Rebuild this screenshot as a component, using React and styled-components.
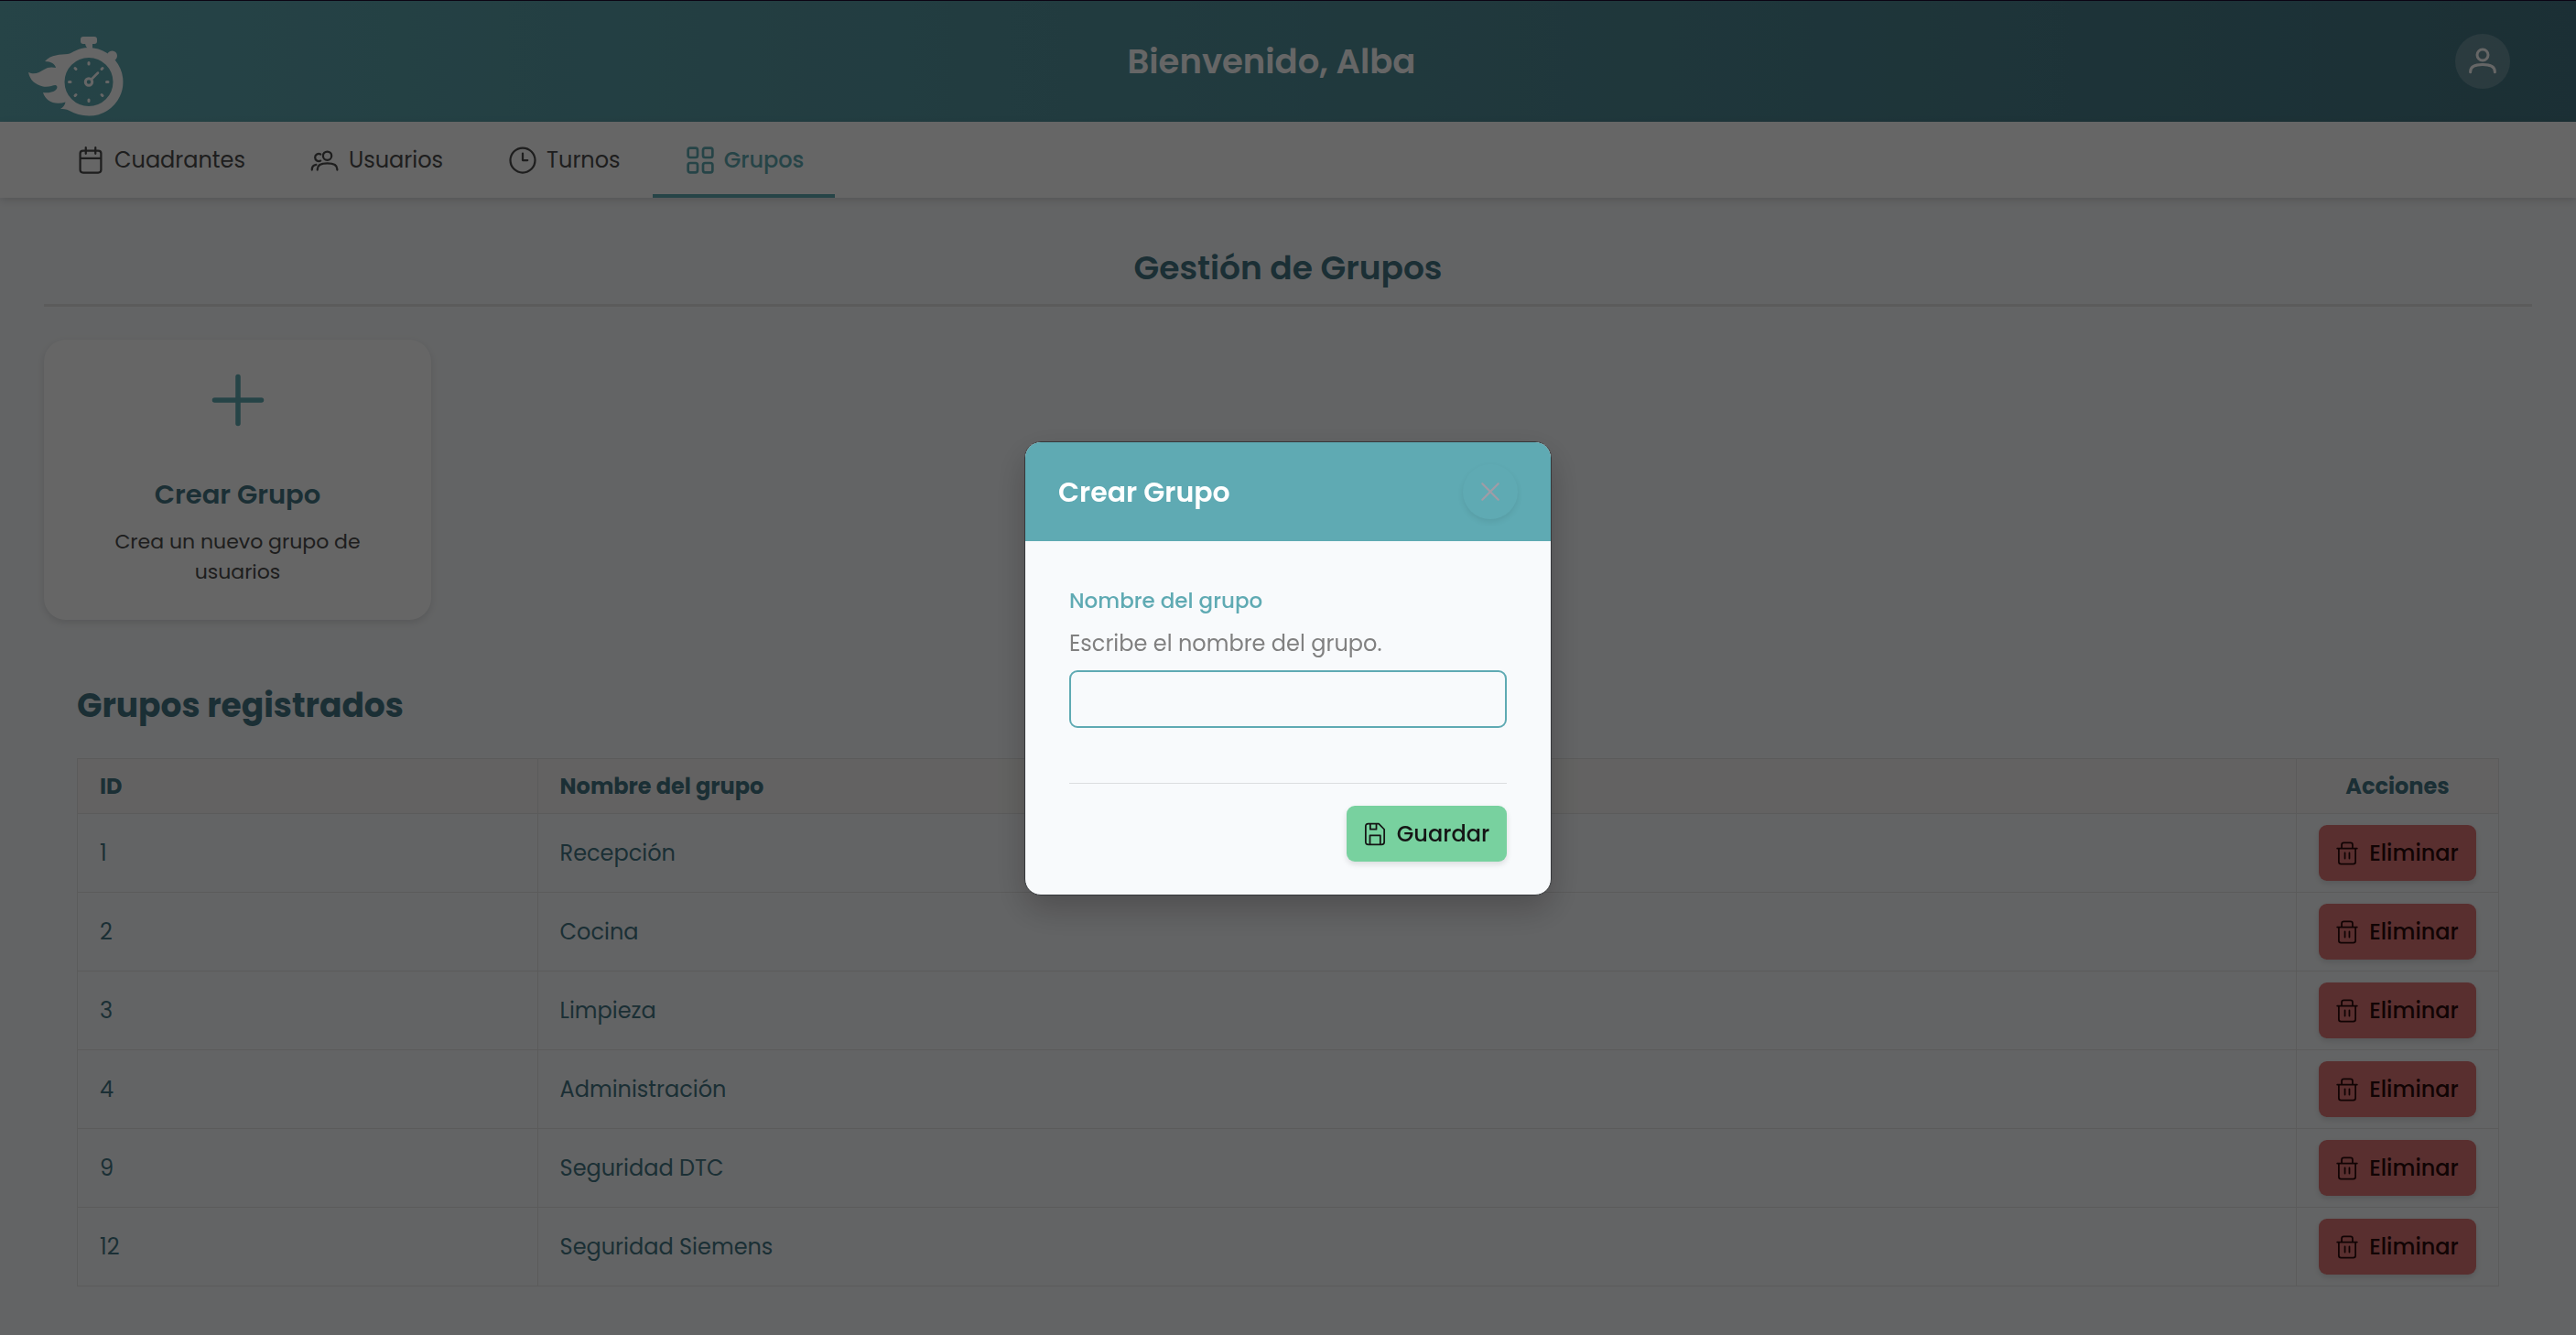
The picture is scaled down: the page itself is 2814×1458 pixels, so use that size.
import React from "react";
import styled, { createGlobalStyle } from "styled-components";

const font = `Poppins, Inter, "Open Sans", sans-serif`;

const GlobalStyle = createGlobalStyle`
  * { box-sizing: border-box; }
  body { margin: 0; background: #f8fafc; font-family: ${font}; color: #4b4b4b; }
  h1, h2, h3, p { margin: 0; }
  button, input { font-family: inherit; }
`;

const Page = styled.div`
  min-height: 100vh;
  background: #f8fafc;
`;

const TopBar = styled.header`
  display: flex;
  align-items: center;
  justify-content: space-between;
  height: 133px;
  padding: 0 72px 0 24px;
  border-top: 1px solid #1c0a30;
  background: linear-gradient(to right, #5faab2, #457784);
`;

const LogoLink = styled.a`
  display: flex;
  width: 72px;
  padding-top: 34px;
  color: #fff;

  svg {
    flex: none;
  }
`;

const Welcome = styled.h1`
  font-size: 37px;
  line-height: 54px;
  font-weight: 600;
  color: #fff;
`;

const Avatar = styled.button`
  display: flex;
  align-items: center;
  justify-content: center;
  width: 60px;
  height: 60px;
  padding: 0;
  border: 0;
  border-radius: 50%;
  background: rgba(255, 255, 255, 0.2);
  color: #fff;
`;

const Tabs = styled.nav`
  position: relative;
  display: flex;
  gap: 1px;
  padding: 0 47px;
  background: #fff;
  box-shadow: 0 3px 9px rgba(0, 0, 0, 0.14);
`;

const Tab = styled.a`
  display: flex;
  align-items: center;
  gap: 8px;
  height: 83px;
  padding: 4px 34px 0;
  border-bottom: 4px solid ${(p) => (p.$active ? "#5faab2" : "transparent")};
  color: ${(p) => (p.$active ? "#5faab2" : "#4b4b4b")};
  font-size: 24px;
  font-weight: ${(p) => (p.$active ? 500 : 400)};
  text-decoration: none;
`;

const Main = styled.main`
  padding: 50px 48px 48px;
`;

const PageTitle = styled.h2`
  padding-bottom: 12px;
  border-bottom: 3px solid #e4e4e4;
  color: #457784;
  font-size: 36px;
  line-height: 54px;
  font-weight: 600;
  text-align: center;
`;

const Card = styled.button`
  display: flex;
  flex-direction: column;
  align-items: center;
  width: 423px;
  margin-top: 36px;
  padding: 15px 60px 36px;
  border: 0;
  border-radius: 24px;
  background: #fff;
  box-shadow: 0 3px 9px rgba(0, 0, 0, 0.12);
  color: #5faab2;
`;

const CardTitle = styled.span`
  margin-top: 30px;
  color: #457784;
  font-size: 29px;
  line-height: 45px;
  font-weight: 600;
`;

const CardText = styled.span`
  margin-top: 12px;
  color: #4b4b4b;
  font-size: 22px;
  line-height: 33px;
`;

const Section = styled.section`
  padding: 67px 36px 0;
`;

const SectionTitle = styled.h2`
  margin-bottom: 30px;
  color: #457784;
  font-size: 36px;
  line-height: 54px;
  font-weight: 700;
`;

const Table = styled.table`
  width: 100%;
  border-collapse: collapse;
  color: #457784;
  font-size: 24px;
  line-height: 36px;
`;

const Th = styled.th`
  width: ${(p) => p.$width || "auto"};
  padding: 12px 24px 11px;
  border: 1px solid #e4e4e4;
  background: #f8f6f4;
  font-weight: 700;
  text-align: ${(p) => (p.$center ? "center" : "left")};
`;

const Td = styled.td`
  height: 86px;
  padding: 12px 24px;
  border: 1px solid #e4e4e4;
`;

const Action = styled.button`
  display: flex;
  align-items: center;
  justify-content: center;
  gap: 10px;
  width: ${(p) => (p.$save ? "175px" : "172px")};
  height: 61px;
  padding: 0 2px 0 0;
  border: 0;
  border-radius: 9px;
  background: ${(p) => (p.$save ? "#78d19f" : "#df7676")};
  box-shadow: 0 3px 6px rgba(0, 0, 0, 0.12);
  color: ${(p) => (p.$save ? "#151515" : "#2c0b0b")};
  font-size: 24px;
  font-weight: 500;
`;

const Overlay = styled.div`
  position: fixed;
  inset: 0;
  display: flex;
  align-items: center;
  justify-content: center;
  padding-top: 2px;
  background: rgba(0, 0, 0, 0.6);
`;

const Dialog = styled.div`
  width: 576px;
  border: 1px solid #36383b;
  border-radius: 18px;
  overflow: hidden;
  background: #f8fafc;
  box-shadow: 0 15px 36px rgba(0, 0, 0, 0.22);
`;

const DialogHeader = styled.div`
  display: flex;
  align-items: center;
  justify-content: space-between;
  height: 108px;
  padding: 0 36px;
  background: #5faab3;
`;

const DialogTitle = styled.h3`
  color: #fff;
  font-size: 30px;
  line-height: 45px;
  font-weight: 600;
`;

const Close = styled.button`
  display: flex;
  align-items: center;
  justify-content: center;
  width: 60px;
  height: 60px;
  padding: 0;
  border: 0;
  border-radius: 50%;
  background: transparent;
  box-shadow: 0 3px 6px rgba(0, 0, 0, 0.08);
  color: #a09ca6;
`;

const DialogBody = styled.form`
  padding: 47px 48px 36px;
`;

const Label = styled.label`
  display: block;
  color: #5faab3;
  font-size: 23px;
  line-height: 36px;
  font-weight: 500;
`;

const Hint = styled.p`
  margin: 11px 0;
  color: #808080;
  font-size: 24px;
  line-height: 36px;
`;

const Field = styled.input`
  display: block;
  width: 100%;
  height: 63px;
  padding: 0 16px;
  border: 2px solid #5faab3;
  border-radius: 9px;
  outline: 0;
  background: transparent;
  font-size: 24px;
`;

const DialogFooter = styled.div`
  display: flex;
  justify-content: flex-end;
  margin-top: 60px;
  padding-top: 24px;
  border-top: 1px solid #dcdee0;
`;

const Icon = ({ size = 36, stroke = 1.5, children }) => (
  <svg width={size} height={size} viewBox="0 0 24 24" fill="none" stroke="currentColor" strokeWidth={stroke} strokeLinecap="round" strokeLinejoin="round" aria-hidden="true">
    {children}
  </svg>
);

const CalendarIcon = () => (
  <Icon><path d="M15.500 2.800V7.200M8.500 2.800V7.200M4.400 10.500H19.600M6.500 5H17.500C19 5 19.600 5.700 19.600 7V19C19.600 20.400 19 21 17.500 21H6.500C5 21 4.400 20.400 4.400 19V7C4.400 5.700 5 5 6.500 5Z" /></Icon>
);
const UsersIcon = () => (
  <Icon><path d="M6.500 19V18.500C6.500 15.500 9 14.300 13.700 14.300S20.900 15.500 20.900 18.500V19M2.500 19C2.500 17 3.500 15.400 5.600 15.200M8.800 12.400A2.700 2.700 0 1 1 8.800 7.700" /><circle cx="13.700" cy="8.800" r="3.100" /></Icon>
);
const ClockIcon = () => (
  <Icon><circle cx="12" cy="12" r="9" /><path d="M12 7V12H15.500" /></Icon>
);
const GridIcon = () => (
  <Icon stroke={1.8}>
    <rect x="3.100" y="3.100" width="6.900" height="6.900" rx="1.500" /><rect x="14" y="3.100" width="6.900" height="6.900" rx="1.500" />
    <rect x="3.100" y="14" width="6.900" height="6.900" rx="1.500" /><rect x="14" y="14" width="6.900" height="6.900" rx="1.500" />
  </Icon>
);
const UserIcon = () => (
  <Icon stroke={2}><path d="M3.100 19.800V19.500C3.100 15.500 7 14.400 12 14.400S20.900 15.500 20.900 19.500V19.800" /><circle cx="12" cy="7.300" r="4" /></Icon>
);
const TrashIcon = () => (
  <Icon size={28}><path d="M2.700 7.300H21.300M4.200 7.300V20C4.200 21.400 4.900 22 6.200 22H17.800C19.100 22 19.800 21.400 19.800 20V7.300M6.900 7.300V4C6.900 2.700 7.600 2.050 8.900 2.050H15.100C16.400 2.050 17.100 2.700 17.100 4V7.300M9.900 11.500V16.800M14.100 11.500V16.800" /></Icon>
);
const SaveIcon = () => (
  <Icon size={28}><path d="M3.300 19.200V4.800C3.300 3.200 4 2.350 5.800 2.350H15.500L20.700 7.500V19.200C20.700 20.800 20 21.650 18.200 21.650H5.800C4 21.650 3.300 20.800 3.300 19.200ZM7.300 21.300V13.100H17V21.300M7.600 2.600V7.400H13.300V2.600" /></Icon>
);

const Logo = () => (
  <svg width="116" height="96" viewBox="24 36 116 96" fill="currentColor" aria-hidden="true">
    <rect x="88" y="40" width="18" height="8" rx="3" />
    <path d="M93 47H101V54H98C95 53 93 50 93 47Z" />
    <circle cx="122.500" cy="61" r="5.500" />
    <path fillRule="evenodd" d="M97 52C104 52 111 54 117 58L126 66A37 37 0 0 1 97 126.500C89 126.500 82 124 76 121C72 119 69 119 66 119C69 117 71 115 71.500 111.500C60 115 50 111 47 101C55 102 62 100 62.500 95C61 90 56 96 47 94.500C38 92 33 88 31 79C38 82 43 79 48 76C52 73 57 73 61 74C60 70 56 67 49 67C56 59 66 60 74 59C80 58 84 52 97 52ZM97 63A26.500 26.500 0 1 0 97 116A26.500 26.500 0 0 0 97 63Z" />
    <g fill="none" stroke="currentColor" strokeLinecap="round" strokeWidth="3">
      <circle cx="97" cy="89.500" r="3.700" />
      <path d="M100 86.500L107 79.500" strokeWidth="2.500" />
      <path d="M97 68.500V70M97 109V110.500M75.500 89.500H77M116.500 89.500H118M82 74.500L83 75.500M112 74.500L111 75.500M82 104.500L83 103.500M112 104.500L111 103.500" />
    </g>
  </svg>
);

const tabs = [
  ["Cuadrantes", CalendarIcon],
  ["Usuarios", UsersIcon],
  ["Turnos", ClockIcon],
  ["Grupos", GridIcon],
];

const groups = [
  [1, "Recepción"],
  [2, "Cocina"],
  [3, "Limpieza"],
  [4, "Administración"],
  [9, "Seguridad DTC"],
  [12, "Seguridad Siemens"],
];

export default function App() {
  return (
    <Page>
      <GlobalStyle />
      <TopBar>
        <LogoLink href="#inicio" aria-label="Inicio"><Logo /></LogoLink>
        <Welcome>Bienvenido, Alba</Welcome>
        <Avatar type="button" aria-label="Perfil"><UserIcon /></Avatar>
      </TopBar>
      <Tabs>
        {tabs.map(([name, TabIcon]) => (
          <Tab key={name} href={`#${name.toLowerCase()}`} $active={name === "Grupos"}>
            <TabIcon />
            {name}
          </Tab>
        ))}
      </Tabs>
      <Main>
        <PageTitle>Gestión de Grupos</PageTitle>
        <Card type="button">
          <Icon size={102} stroke={1.3}><path d="M6 12H18M12 6V18" /></Icon>
          <CardTitle>Crear Grupo</CardTitle>
          <CardText>Crea un nuevo grupo de usuarios</CardText>
        </Card>
        <Section>
          <SectionTitle>Grupos registrados</SectionTitle>
          <Table>
            <thead>
              <tr>
                <Th $width="19%">ID</Th>
                <Th>Nombre del grupo</Th>
                <Th $width="221px" $center>Acciones</Th>
              </tr>
            </thead>
            <tbody>
              {groups.map(([id, name]) => (
                <tr key={id}>
                  <Td>{id}</Td>
                  <Td>{name}</Td>
                  <Td><Action type="button"><TrashIcon />Eliminar</Action></Td>
                </tr>
              ))}
            </tbody>
          </Table>
        </Section>
      </Main>
      <Overlay>
        <Dialog role="dialog" aria-modal="true" aria-labelledby="dialog-title">
          <DialogHeader>
            <DialogTitle id="dialog-title">Crear Grupo</DialogTitle>
            <Close type="button" aria-label="Cerrar">
              <Icon size={36}><path d="M6.200 6.200L17.800 17.800M17.800 6.200L6.200 17.800" /></Icon>
            </Close>
          </DialogHeader>
          <DialogBody>
            <Label htmlFor="group-name">Nombre del grupo</Label>
            <Hint id="group-hint">Escribe el nombre del grupo.</Hint>
            <Field id="group-name" type="text" aria-describedby="group-hint" />
            <DialogFooter>
              <Action type="submit" $save><SaveIcon />Guardar</Action>
            </DialogFooter>
          </DialogBody>
        </Dialog>
      </Overlay>
    </Page>
  );
}
